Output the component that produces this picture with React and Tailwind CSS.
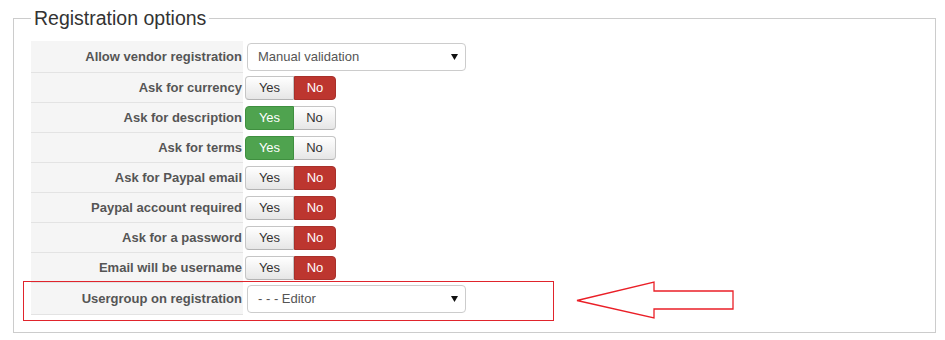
import React from "react";

const rows = [
  { label: "Allow vendor registration", type: "select", value: "Manual validation" },
  { label: "Ask for currency", type: "toggle", on: false },
  { label: "Ask for description", type: "toggle", on: true },
  { label: "Ask for terms", type: "toggle", on: true },
  { label: "Ask for Paypal email", type: "toggle", on: false },
  { label: "Paypal account required", type: "toggle", on: false },
  { label: "Ask for a password", type: "toggle", on: false },
  { label: "Email will be username", type: "toggle", on: false },
  { label: "Usergroup on registration", type: "select", value: "- - - Editor" },
];

function Select({ value }) {
  return (
    <div className="ml-[4px] flex h-[28px] w-[219px] items-center justify-between rounded-[4px] border border-[#cccccc] bg-white pl-[10px] pr-[7px] text-[13px] text-[#555555]">
      <span>{value}</span>
      <svg width="7" height="6" viewBox="0 0 7 6" className="mt-[1px]">
        <polygon points="0,0 7,0 3.5,6" fill="#111" />
      </svg>
    </div>
  );
}

function Toggle({ on }) {
  const inactive =
    "bg-gradient-to-b from-white to-[#e6e6e6] text-[#333333] border border-[#c5c5c5] border-b-[#b3b3b3]";
  return (
    <div className="ml-[2px] flex h-[24px] text-[13px]">
      <div
        className={
          "flex w-[49px] items-center justify-center rounded-l-[4px] " +
          (on ? "border border-[#3f8f3f] bg-[#4fa34f] text-white" : inactive)
        }
      >
        Yes
      </div>
      <div
        className={
          "flex w-[42px] items-center justify-center rounded-r-[4px] " +
          (!on ? "border border-[#a8302a] bg-[#bd362f] text-white" : inactive + " border-l-0")
        }
      >
        No
      </div>
    </div>
  );
}

export default function App() {
  return (
    <div className="relative h-[340px] w-[945px] overflow-hidden bg-white font-['Liberation_Sans',Arial,sans-serif]">
      <div className="pl-[13px] pt-[7px]">
        <fieldset className="w-[923px] border border-[#cccccc] pb-[17px] pl-[17px] pt-[12px]">
          <legend className="px-[3px] text-[19.5px] leading-[22px] text-[#333333]">
            Registration options
          </legend>
          <div className="flex flex-col">
            {rows.map((r, i) => {
              const tall = r.type === "select";
              return (
                <div key={i} className="flex">
                  <div
                    className={
                      "flex w-[212px] items-center justify-end border-b border-[#e3e3e3] bg-[#f5f5f5] pr-[1px] text-[13px] font-bold text-[#555555] " +
                      (tall ? "h-[32px]" : "h-[30px]")
                    }
                  >
                    {r.label}
                  </div>
                  <div className="flex items-center pb-[1px]">
                    {r.type === "select" ? <Select value={r.value} /> : <Toggle on={r.on} />}
                  </div>
                </div>
              );
            })}
          </div>
        </fieldset>
      </div>
      <div className="absolute left-[23px] top-[281px] h-[40px] w-[531px] border border-[#e0242c]" />
      <svg className="absolute left-0 top-0" width="945" height="340">
        <polygon
          points="577,300.5 654,282 654,291 733,291 733,309 654,309 654,318"
          fill="none"
          stroke="#ea1f27"
          strokeWidth="1.3"
        />
      </svg>
    </div>
  );
}
